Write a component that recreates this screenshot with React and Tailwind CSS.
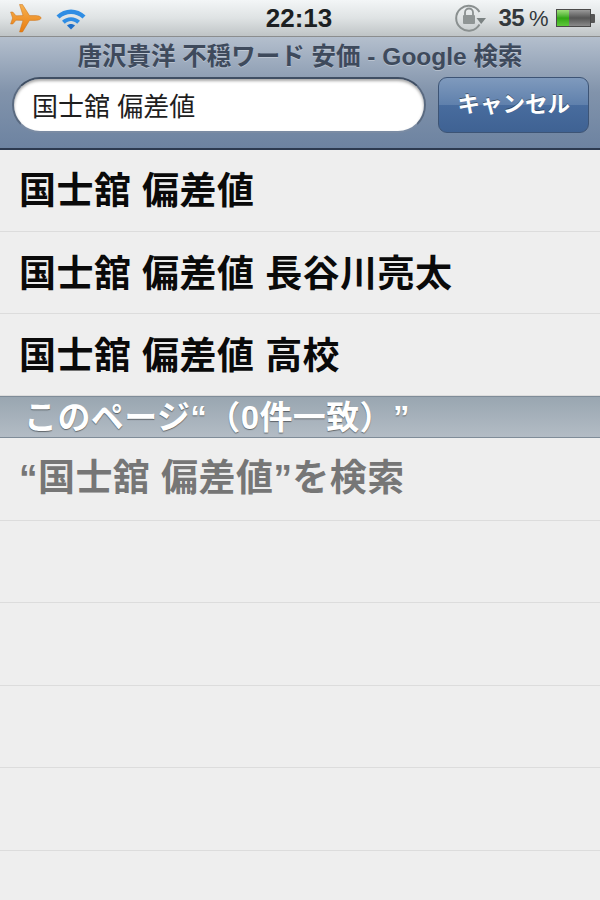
const CJK = "font-['Liberation_Sans','Noto_Sans_CJK_JP',sans-serif]";

function Row({ children, muted, h = "h-[82.6px]", pt = "" }) {
  return (
    <div className={`${h} ${pt} shrink-0 flex items-center pl-[19px] border-b border-[#dcdcdc] font-bold text-[37px] tracking-[0.45px] leading-none whitespace-nowrap ${muted ? "text-[#767676]" : "text-[#0a0a0a]"}`}>
      {children}
    </div>
  );
}

function Plane() {
  return (
    <svg width="34" height="30" viewBox="0 0 34 30" className="shrink-0">
      <defs>
        <linearGradient id="pl" x1="0" y1="0" x2="0" y2="1">
          <stop offset="0" stopColor="#f7b250" />
          <stop offset="1" stopColor="#e87c10" />
        </linearGradient>
      </defs>
      <path d="M32 15 C32 13.4 29 12.6 26 12.6 L20.5 12.6 L13.5 1.5 L10.5 1.5 L14 12.6 L7 12.8 L3.8 9 L1.6 9 L3.6 15 L1.6 21 L3.8 21 L7 17.2 L14 17.4 L10.5 29 L13.5 29 L20.5 17.4 L26 17.4 C29 17.4 32 16.6 32 15 Z" fill="url(#pl)" stroke="#c9701a" strokeWidth="0.5" />
    </svg>
  );
}

function Wifi() {
  return (
    <svg width="32" height="24" viewBox="0 0 32 24" className="shrink-0">
      <path d="M1.5 9.5 C9.5 1.5 22.5 1.5 30.5 9.5 L27.5 12.6 C21 6.5 11 6.5 4.5 12.6 Z" fill="#2f8de4" />
      <path d="M7 14.8 C12 10 20 10 25 14.8 L22.2 17.7 C18.5 14.2 13.5 14.2 9.8 17.7 Z" fill="#2f8de4" />
      <path d="M12 19.6 C14.4 17.6 17.6 17.6 20 19.6 L16 23.6 Z" fill="#1f6fc8" />
    </svg>
  );
}

function Lock() {
  return (
    <svg width="34" height="30" viewBox="0 0 34 30" className="shrink-0">
      <path d="M25.5 21.5 A12.5 12.5 0 1 1 25.5 9" fill="none" stroke="#8a9090" strokeWidth="2" />
      <path d="M22.5 15 L32 15 L27.2 21 Z" fill="#7b8282" />
      <path d="M11 12 V9.5 A4 4 0 0 1 19 9.5 V12" fill="none" stroke="#8a9090" strokeWidth="1.8" />
      <rect x="9" y="12" width="12" height="9" rx="1" fill="#8f9595" />
    </svg>
  );
}

function Battery() {
  return (
    <div className="flex items-center shrink-0">
      <div className="w-[35px] h-[18px] border border-[#4a4a4a] bg-gradient-to-b from-[#9a9a9a] via-[#555] to-[#8b8b8b] flex">
        <div className="w-[12px] h-full bg-gradient-to-b from-[#9fe07a] via-[#2fa80f] to-[#5fc83a]" />
      </div>
      <div className="w-[4px] h-[9px] bg-[#555] rounded-r-[1px]" />
    </div>
  );
}

export default function App() {
  return (
    <div className={`w-[600px] h-[900px] overflow-hidden flex flex-col bg-[#eeeeee] ${CJK}`}>
      <div className="h-[37px] shrink-0 relative flex items-center justify-between pl-[9px] pr-[5px] bg-gradient-to-b from-[#f3f6f7] via-[#dfe3e4] to-[#bfc4c6] border-b border-[#8b8d8e]">
        <div className="flex items-center gap-[12px]">
          <Plane />
          <Wifi />
        </div>
        <div className="absolute left-0 right-0 top-[3px] pr-[2px] text-center font-bold text-[26px] leading-[30px] text-[#1c1f22]">22:13</div>
        <div className="flex items-center">
          <Lock />
          <div className="ml-[11px] mr-[8px] text-[24px] leading-none text-[#33383b] whitespace-nowrap font-bold tracking-[-0.6px]">35<span className="ml-[5px] text-[22px] font-normal">%</span></div>
          <Battery />
        </div>
      </div>

      <div className="h-[113px] shrink-0 flex flex-col bg-gradient-to-b from-[#b4bfcd] via-[#8193ab] to-[#6d83a1] border-b-2 border-[#2d3a50]">
        <div className="h-[37px] pt-[3px] flex items-center justify-center text-[24.5px] font-bold text-[#3e4a5c] whitespace-nowrap leading-none [text-shadow:0_1px_0_rgba(255,255,255,0.3)]">
          唐沢貴洋 不穏ワード 安価 - Google 検索
        </div>
        <div className="flex items-center pl-[12px] pr-[11px] pt-[3px] gap-[12px]">
          <div className="w-[415px] h-[56px] rounded-[28px] bg-white border-2 border-t-[#3f4e63] border-x-[#5a6a80] border-b-[#7a8ba3] shadow-[inset_0_2px_3px_rgba(0,0,0,0.35)] flex items-center pl-[18px] pt-[3px] text-[26px] text-[#1e1e1e] whitespace-nowrap leading-none">
            国士舘 偏差値
          </div>
          <div className="w-[151px] h-[56px] rounded-[9px] border border-[#3d5475] bg-[linear-gradient(to_bottom,#7f9abd_0%,#5f80ac_50%,#486c9e_50%,#3f6293_100%)] flex items-center justify-center text-[22.5px] font-bold text-white whitespace-nowrap leading-none [text-shadow:0_-1px_0_rgba(0,0,0,0.4)]">
            キャンセル
          </div>
        </div>
      </div>

      <Row h="h-[82px]" pt="pt-[2px]">国士舘 偏差値</Row>
      <Row h="h-[82px]" pt="pt-[3px]">国士舘 偏差値 長谷川亮太</Row>
      <Row h="h-[82px]" pt="pt-[3px]">国士舘 偏差値 高校</Row>

      <div className="h-[42px] shrink-0 flex items-center pl-[24px] bg-gradient-to-b from-[#99a6b1] to-[#b3bcc5] border-t border-b border-[#7f8c98] text-[33px] tracking-[0.4px] font-bold text-white leading-none whitespace-nowrap [text-spacing-trim:space-all] [text-shadow:0_1px_1px_rgba(0,0,0,0.45)]">
        このページ“（0件一致）”
      </div>

      <Row muted>“国士舘 偏差値”を検索</Row>
      <Row> </Row>
      <Row> </Row>
      <Row> </Row>
      <Row> </Row>
    </div>
  );
}
